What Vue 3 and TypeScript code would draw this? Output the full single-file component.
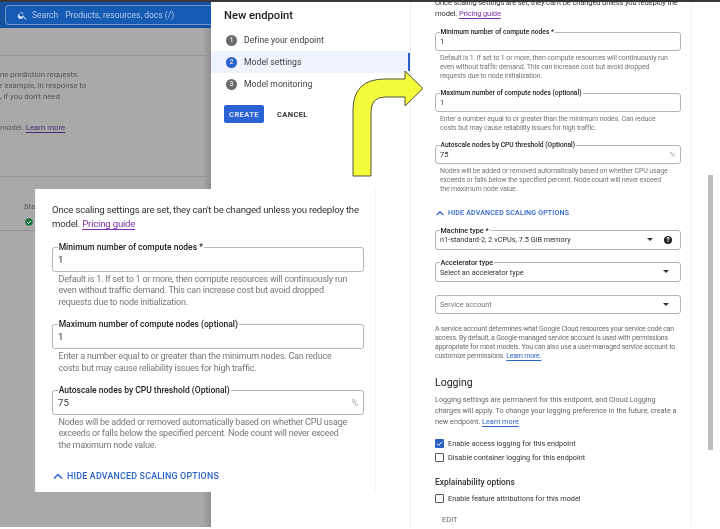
<template>
  <div class="page">
    <div class="topline"></div>
    <div class="body">
      <section class="backdrop">
        <header class="gcp-header">
          <div class="search">
            <svg viewBox="0 0 24 24" class="search-icon"><path d="M15.5 14h-.8l-.3-.3A6.5 6.5 0 1 0 14 15.5l.3.3v.8l5 5 1.5-1.5-5-5zm-6 0a4.5 4.5 0 1 1 0-9 4.5 4.5 0 0 1 0 9z" fill="#c5d6f2"/></svg>
            <span class="search-word">Search</span>
            <span class="search-hint">Products, resources, docs (/)</span>
          </div>
        </header>
        <div class="back-banner"></div>
        <div class="back-text">
          <p>ne prediction requests.</p>
          <p>r example, in response to</p>
          <p>, if you don't need</p>
          <p class="back-model">model. <a>Learn more</a></p>
        </div>
        <div class="back-table">
          <span class="stat">Stat</span>
          <svg viewBox="0 0 24 24" class="ok-icon"><circle cx="12" cy="12" r="11" fill="#16703a"/><path d="M6.5 12.500l4 4 7-8" fill="none" stroke="#fff" stroke-width="3"/></svg>
        </div>
      </section>

      <nav class="stepper">
        <h1>New endpoint</h1>
        <div v-for="(step, i) in steps" :key="step" class="step" :class="{ active: i === 1 }">
          <span class="dot">{{ i + 1 }}</span>
          <span>{{ step }}</span>
        </div>
        <div class="actions">
          <button class="create">CREATE</button>
          <button class="cancel">CANCEL</button>
        </div>
      </nav>

      <main class="form">
        <div class="scaling small">
          <p class="intro">Once scaling settings are set, they can't be changed unless you redeploy the model. <a class="visited">Pricing guide</a></p>
          <div v-for="f in scalingFields" :key="f.label" class="block">
            <div class="field">
              <span class="label">{{ f.label }}</span>
              <span class="value">{{ f.value }}</span>
              <span v-if="f.suffix" class="suffix">{{ f.suffix }}</span>
            </div>
            <p class="hint"><span v-for="line in f.hint" :key="line">{{ line }}</span></p>
          </div>
          <div class="toggle">
            <svg viewBox="0 0 24 24"><path d="M4 17l8-8 8 8" fill="none" stroke="#2b63c9" stroke-width="3"/></svg>
            HIDE ADVANCED SCALING OPTIONS
          </div>
        </div>

        <div class="select machine">
          <span class="label">Machine type *</span>
          <span class="value">n1-standard-2, 2 vCPUs, 7.5 GiB memory</span>
          <i class="caret"></i>
          <span class="help">?</span>
        </div>
        <div class="select">
          <span class="label">Accelerator type</span>
          <span class="value">Select an accelerator type</span>
          <i class="caret"></i>
        </div>
        <div class="select">
          <span class="value muted">Service account</span>
          <i class="caret"></i>
        </div>
        <p class="service-note">A service account determines what Google Cloud resources your service code can access. By default, a Google-managed service account is used with permissions appropriate for most models. You can also use a user-managed service account to customize permissions. <a>Learn more.</a></p>

        <h2>Logging</h2>
        <p class="logging-note">Logging settings are permanent for this endpoint, and Cloud Logging<br />charges will apply. To change your logging preference in the future, create a<br />new endpoint. <a>Learn more</a></p>
        <label class="check first"><span class="box on"><svg viewBox="0 0 12 12"><path d="M2.500 6.200l2.400 2.400 4.600-5" fill="none" stroke="#fff" stroke-width="1.300"/></svg></span>Enable access logging for this endpoint</label>
        <label class="check second"><span class="box"></span>Disable container logging for this endpoint</label>
        <h3>Explainability options</h3>
        <label class="check"><span class="box"></span>Enable feature attributions for this model</label>
        <div class="edit">EDIT</div>
      </main>

      <div class="scrollbar"><div class="thumb"></div></div>
    </div>

    <!-- zoomed call-out pasted over the page -->
    <aside class="callout">
      <div class="scaling big">
        <p class="intro">Once scaling settings are set, they can't be changed unless you redeploy the model. <a class="visited">Pricing guide</a></p>
        <div v-for="f in scalingFields" :key="f.label" class="block">
          <div class="field">
            <span class="label">{{ f.label }}</span>
            <span class="value">{{ f.value }}</span>
            <span v-if="f.suffix" class="suffix">{{ f.suffix }}</span>
          </div>
          <p class="hint"><span v-for="line in f.hint" :key="line">{{ line }}</span></p>
        </div>
        <div class="toggle">
          <svg viewBox="0 0 24 24"><path d="M4 17l8-8 8 8" fill="none" stroke="#2b63c9" stroke-width="3"/></svg>
          HIDE ADVANCED SCALING OPTIONS
        </div>
      </div>
    </aside>

    <svg class="arrow" viewBox="0 0 80 112" width="80" height="112">
      <path d="M2 110V44Q2 13 34 13H54V5L72 22.500 54 40V31H34Q20 31 20 46V110Z" fill="#f4fb3a" stroke="#55563a" stroke-width="1"/>
    </svg>
  </div>
</template>

<script setup lang="ts">
interface ScalingField {
  label: string
  value: string
  suffix?: string
  hint: string[]
}

const steps = ['Define your endpoint', 'Model settings', 'Model monitoring']

const scalingFields: ScalingField[] = [
  {
    label: 'Minimum number of compute nodes *',
    value: '1',
    hint: [
      'Default is 1. If set to 1 or more, then compute resources will continuously run',
      'even without traffic demand. This can increase cost but avoid dropped',
      'requests due to node initialization.'
    ]
  },
  {
    label: 'Maximum number of compute nodes (optional)',
    value: '1',
    hint: [
      'Enter a number equal to or greater than the minimum nodes. Can reduce',
      'costs but may cause reliability issues for high traffic.'
    ]
  },
  {
    label: 'Autoscale nodes by CPU threshold (Optional)',
    value: '75',
    suffix: '%',
    hint: [
      'Nodes will be added or removed automatically based on whether CPU usage',
      'exceeds or falls below the specified percent. Node count will never exceed',
      'the maximum node value.'
    ]
  }
]
</script>

<style>
html,
body {
  margin: 0;
  background: #fff;
}
</style>

<style scoped>
.page {
  position: relative;
  width: 720px;
  height: 529px;
  overflow: hidden;
  background: #fff;
  font-family: Roboto, "Liberation Sans", sans-serif;
  color: #202124;
  filter: blur(0.35px);
}

p,
h1,
h2,
h3 {
  margin: 0;
}

a {
  color: #2b63c9;
  text-decoration: underline;
  text-underline-offset: 1.5px;
}

a.visited {
  color: #7b2fa8;
}

.topline {
  height: 2px;
  background: #38383a;
}

.body {
  display: flex;
  height: 525px;
}

/* greyed-out console behind the dialog */
.backdrop {
  width: 211px;
  flex: none;
  display: flex;
  flex-direction: column;
  overflow: hidden;
  background: linear-gradient(90deg, #a9a9a9 96%, #8f8f8f 100%);
  white-space: nowrap;
}

.gcp-header {
  height: 26px;
  flex: none;
  padding-top: 3px;
  box-sizing: border-box;
  background: #14519f;
}

.search {
  display: flex;
  align-items: center;
  height: 20px;
  margin-left: 5px;
  padding-left: 11px;
  border: 1px solid #6f95cc;
  border-right: 0;
  border-radius: 4px 0 0 4px;
  box-sizing: border-box;
  background: #155bb3;
  font-size: 8.500px;
  color: #b5c9e8;
}

.search-icon {
  width: 11px;
  height: 11px;
  margin-right: 4px;
}

.search-word {
  margin-right: 7px;
}

.back-banner {
  height: 28px;
  flex: none;
  box-sizing: border-box;
  border-bottom: 1px solid #999;
}

.back-text {
  height: 121px;
  flex: none;
  padding-top: 13px;
  box-sizing: border-box;
  border-bottom: 1px solid #999;
  font-size: 7.800px;
  line-height: 11px;
  color: #555;
}

.back-model {
  margin-top: 20px;
}

.back-model a {
  color: #4b2a78;
}

.back-table {
  position: relative;
  height: 54px;
  box-shadow: inset 0 -1px 0 #8e8e8e;
}

.stat {
  position: absolute;
  left: 24px;
  top: 25px;
  font-size: 7.500px;
  color: #555;
}

.ok-icon {
  position: absolute;
  left: 25px;
  top: 41px;
  width: 8px;
  height: 8px;
}

/* stepper */
.stepper {
  width: 200px;
  flex: none;
  box-sizing: border-box;
  border-right: 1px solid #efefef;
}

.stepper h1 {
  height: 14px;
  margin: 7px 0 6px 13px;
  font-size: 11.200px;
  font-weight: 500;
  line-height: 14px;
  color: #222;
}

.step {
  position: relative;
  display: flex;
  align-items: center;
  gap: 7px;
  height: 22px;
  padding-left: 15px;
  font-size: 8.600px;
  letter-spacing: 0.05px;
  color: #3c4043;
}

.step.active {
  background: #eef3fd;
}

.step.active::after {
  content: "";
  position: absolute;
  right: 0;
  top: 2px;
  width: 2px;
  height: 18px;
  background: #2a5fc4;
}

.dot {
  display: flex;
  align-items: center;
  justify-content: center;
  width: 11px;
  height: 11px;
  border-radius: 50%;
  background: #6a6a6a;
  color: #ddd;
  font-size: 7px;
  font-weight: 700;
  letter-spacing: 0;
}

.active .dot {
  background: #2a5fd0;
}

.actions {
  display: flex;
  align-items: center;
  gap: 13px;
  margin: 10px 0 0 13px;
}

.actions button {
  height: 18px;
  border: 0;
  padding: 0;
  background: none;
  font-family: inherit;
  font-size: 7.500px;
  font-weight: 700;
  letter-spacing: 0.4px;
}

.actions .create {
  width: 40px;
  border-radius: 2px;
  background: #2b63d4;
  color: #d8e4fa;
}

.actions .cancel {
  color: #333;
}

/* right form column */
.form {
  width: 280px;
  flex: none;
  box-sizing: border-box;
  padding: 0 10px 0 24px;
  background: #fff;
  box-shadow: 1px 0 0 #f2f2f2;
  white-space: normal;
}

.scaling {
  --fs-intro: 7.600px;
  --ls-intro: -0.16px;
  --lh-intro: 11px;
  --fs-label: 6.700px;
  --fs-value: 7.500px;
  --fs-hint: 7.100px;
  --ls-hint: -0.17px;
  --lh-hint: 9px;
  --field-h: 19.500px;
  --inset: 4px;
  --label-left: 3.500px;
  --hint-left: 5px;
  --hint-pad: 2px;
  --block-gap: 12.500px;
}

.scaling.big {
  --fs-intro: 9.600px;
  --ls-intro: -0.2px;
  --lh-intro: 14px;
  --fs-label: 8.500px;
  --fs-value: 9.600px;
  --fs-hint: 9px;
  --ls-hint: -0.22px;
  --lh-hint: 11.400px;
  --field-h: 25px;
  --inset: 5px;
  --label-left: 4.700px;
  --hint-left: 6.500px;
  --hint-pad: 2px;
  --block-gap: 16px;
}

.small {
  margin-top: -5px;
}

.intro {
  font-size: var(--fs-intro);
  letter-spacing: var(--ls-intro);
  line-height: var(--lh-intro);
  color: #333;
}

.block {
  margin-top: var(--block-gap);
}

.field,
.select {
  position: relative;
  display: flex;
  align-items: center;
  height: var(--field-h);
  padding-left: var(--inset, 4px);
  box-sizing: border-box;
  border: 1px solid #b5b5b5;
  border-radius: 3px;
}

.label {
  position: absolute;
  left: var(--label-left, 3.500px);
  top: -5px;
  padding: 0 1px;
  background: #fff;
  font-size: var(--fs-label, 7.200px);
  font-weight: 500;
  line-height: 9px;
  white-space: nowrap;
  color: #222;
}

.value {
  font-size: var(--fs-value, 7.300px);
  color: #333;
}

.suffix {
  position: absolute;
  right: 5px;
  font-size: var(--fs-hint);
  color: #aaa;
}

.hint {
  padding: var(--hint-pad) 0 0 var(--hint-left);
  font-size: var(--fs-hint);
  letter-spacing: var(--ls-hint);
  line-height: var(--lh-hint);
  color: #777;
}

.hint span {
  display: block;
  white-space: nowrap;
}

.toggle {
  display: flex;
  align-items: center;
  gap: 3px;
  height: 10px;
  margin-top: 14.500px;
  font-size: 7px;
  font-weight: 500;
  letter-spacing: 0.2px;
  color: #2b63c9;
}

.toggle svg {
  width: 10px;
  height: 10px;
}

.big .toggle {
  height: 12px;
  margin-top: 19px;
  font-size: 8.900px;
}

.big .toggle svg {
  width: 12px;
  height: 12px;
}

.select {
  height: 19.500px;
  margin-top: 12.700px;
}

.caret {
  position: absolute;
  right: 11px;
  top: 7px;
  border: 3px solid transparent;
  border-top: 3.500px solid #333;
  border-bottom: 0;
}

.machine .caret {
  right: 27px;
}

.help {
  position: absolute;
  right: 8px;
  top: 5px;
  width: 8px;
  height: 8px;
  border-radius: 50%;
  background: #222;
  color: #fff;
  font-size: 7px;
  font-weight: 700;
  line-height: 8px;
  text-align: center;
}

.muted {
  color: #777;
}

.service-note {
  margin-top: 10.500px;
  font-size: 6.900px;
  letter-spacing: -0.15px;
  line-height: 9px;
  color: #6b6b6b;
}

h2 {
  margin-top: 15.600px;
  font-size: 10.500px;
  font-weight: 400;
  line-height: 13px;
  color: #222;
}

.logging-note {
  margin-top: 4.500px;
  font-size: 7.250px;
  line-height: 11.300px;
  white-space: nowrap;
  color: #666;
}

.check {
  display: flex;
  align-items: center;
  gap: 4px;
  height: 10px;
  margin-top: 5.600px;
  font-size: 7.300px;
  color: #333;
}

.check.first {
  margin-top: 10.500px;
}

.check.second {
  margin-top: 4.600px;
}

.box {
  width: 9px;
  height: 9px;
  flex: none;
  box-sizing: border-box;
  border: 1px solid #555;
  border-radius: 1px;
}

.box.on {
  border: 0;
  background: #2a5fc4;
}

.box svg {
  display: block;
}

h3 {
  margin-top: 13.400px;
  font-size: 8.400px;
  font-weight: 500;
  line-height: 12px;
  color: #333;
}

.edit {
  margin: 11.700px 0 0 7px;
  font-size: 7.500px;
  line-height: 9px;
  color: #666;
}

.scrollbar {
  width: 5px;
  margin-left: 17px;
  flex: none;
}

.thumb {
  height: 275px;
  margin-top: 173px;
  background: #bdbdbd;
}

/* overlays */
.callout {
  position: absolute;
  left: 35px;
  top: 189px;
  width: 341px;
  height: 303px;
  box-sizing: border-box;
  padding: 14px 12px 0 17px;
  background: #fff;
  box-shadow: inset -1px 0 0 #f3f3f3, inset 5px 0 0 -4px #f3f3f3;
}

.arrow {
  position: absolute;
  left: 351px;
  top: 66px;
}
</style>
